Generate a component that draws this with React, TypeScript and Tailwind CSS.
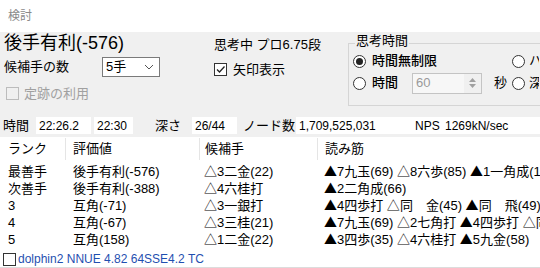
import React from 'react';

const font = "font-['Liberation_Sans','Noto_Sans_CJK_JP',sans-serif]";

const Radio: React.FC<{ checked?: boolean }> = ({ checked }) => (
  <span className="flex h-[13px] w-[13px] shrink-0 items-center justify-center rounded-full border border-[#333] bg-white">
    {checked && <span className="h-[7px] w-[7px] rounded-full bg-[#222]" />}
  </span>
);

const StatBox: React.FC<{ w: string; children?: React.ReactNode }> = ({ w, children }) => (
  <div className={`${w} flex h-[17px] shrink-0 items-center bg-white pl-[3px]`}>{children}</div>
);

// triangles: Lato has no such glyph, so they fall back to the full-width CJK face
const Kif: React.FC<{ text: string }> = ({ text }) => (
  <>
    {text.split(/([▲△])/).map((part, i) =>
      part === '▲' || part === '△' ? (
        <span key={i} className="font-['Lato','Noto_Sans_CJK_JP',sans-serif]">{part}</span>
      ) : (
        <span key={i}>{part}</span>
      )
    )}
  </>
);

const rows = [
  { rank: '最善手', value: '後手有利(-576)', move: '△3二金(22)', pv: '▲7九玉(69) △8六歩(85) ▲1一角成(11)' },
  { rank: '次善手', value: '後手有利(-388)', move: '△4六桂打', pv: '▲2二角成(66)' },
  { rank: '3', value: '互角(-71)', move: '△3一銀打', pv: '▲4四歩打 △同　金(45) ▲同　飛(49)' },
  { rank: '4', value: '互角(-67)', move: '△3三桂(21)', pv: '▲7九玉(69) △2七角打 ▲4四歩打 △同' },
  { rank: '5', value: '互角(158)', move: '△1二金(22)', pv: '▲3四歩(35) △4六桂打 ▲5九金(58)' },
];

export default function App() {
  return (
    <div className={`${font} h-[268px] w-[540px] overflow-hidden bg-[#f0f0f0] text-[13px] text-black`}>
      {/* title */}
      <div className="flex h-[32px] items-center bg-white pl-[8px] text-[12px] text-[#8a8a8a]">検討</div>

      {/* controls */}
      <div className="flex h-[82px] overflow-hidden">
        <div className="w-[210px] shrink-0">
          <div className="h-[24px] pl-[4px] text-[18px] leading-[22px]">後手有利(-576)</div>
          <div className="mt-[1px] flex h-[20px] items-center pl-[4px]">
            <span className="w-[98px]">候補手の数</span>
            <div className="flex h-[20px] w-[58px] items-center justify-between border border-[#7a7a7a] bg-white pl-[3px] pr-[5px]">
              <span>5手</span>
              <svg width="10" height="6" viewBox="0 0 10 6">
                <path d="M1 1 L5 5 L9 1" fill="none" stroke="#555" strokeWidth="1" />
              </svg>
            </div>
          </div>
          <div className="mt-[7px] flex items-center pl-[6px] text-[#a0a0a0]">
            <span className="h-[13px] w-[13px] border border-[#bcbcbc] bg-[#f0f0f0]" />
            <span className="ml-[5px]">定跡の利用</span>
          </div>
        </div>

        <div className="w-[138px] shrink-0 pl-[4px]">
          <div className="mt-[5px] h-[16px] leading-[16px]">思考中 プロ6.75段</div>
          <div className="mt-[7px] flex items-center">
            <span className="flex h-[13px] w-[13px] items-center justify-center border border-[#333] bg-white">
              <svg width="11" height="11" viewBox="0 0 11 11">
                <path d="M2 5.5 L4.5 8 L9.5 2.5" fill="none" stroke="#222" strokeWidth="1.3" />
              </svg>
            </span>
            <span className="ml-[6px]">矢印表示</span>
          </div>
        </div>

        <div className="relative mt-[11px] h-[63px] w-[192px] shrink-0 whitespace-nowrap border border-r-0 border-[#d5d5d5]">
          <span className="absolute left-[6px] top-[-11px] bg-[#f0f0f0] px-[1px] leading-[16px]">思考時間</span>
          <div className="flex h-[24px] items-end pl-[4px]">
            <Radio checked />
            <span className="ml-[6px] w-[140px] shrink-0 font-medium leading-[14px]">時間無制限</span>
            <Radio />
            <span className="ml-[4px] w-[10px] shrink-0 overflow-hidden leading-[14px]">ハ</span>
          </div>
          <div className="mt-[4px] flex h-[22px] items-center pl-[4px]">
            <Radio />
            <span className="ml-[6px] w-[40px] shrink-0 font-medium">時間</span>
            <div className="flex h-[21px] w-[70px] shrink-0 items-center justify-between border border-[#c4c4c4] bg-[#f7f7f7] pl-[3px] text-[#9a9a9a]">
              <span>60</span>
              <span className="flex h-full w-[17px] flex-col items-center justify-center gap-[2px] bg-[#f0f0f0]">
                <svg width="7" height="4" viewBox="0 0 7 4"><path d="M0 4 L3.5 0 L7 4 Z" fill="#a0a0a0" /></svg>
                <svg width="7" height="4" viewBox="0 0 7 4"><path d="M0 0 L3.5 4 L7 0 Z" fill="#a0a0a0" /></svg>
              </span>
            </div>
            <span className="ml-[12px] w-[18px] shrink-0">秒</span>
            <Radio />
            <span className="ml-[4px] w-[10px] shrink-0 overflow-hidden">深</span>
          </div>
        </div>
      </div>

      {/* stats */}
      <div className="flex h-[23px] items-center whitespace-nowrap text-[12px]">
        <span className="w-[36px] shrink-0 pl-[3px] text-[13px]">時間</span>
        <StatBox w="w-[55px]">22:26.2</StatBox>
        <span className="w-[3px] shrink-0" />
        <StatBox w="w-[39px]">22:30</StatBox>
        <span className="w-[59px] shrink-0 pl-[22px] text-[13px]">深さ</span>
        <StatBox w="w-[45px]">26/44</StatBox>
        <span className="w-[59px] shrink-0 pl-[6px] text-[13px]">ノード数</span>
        <StatBox w="w-[111px]">1,709,525,031</StatBox>
        <StatBox w="flex-1">
          <span className="ml-[5px] w-[30px]">NPS</span>
          <span>1269kN/sec</span>
        </StatBox>
      </div>

      {/* list */}
      <div className="h-[131px] border-b border-[#dcdcdc] bg-white">
        <div className="flex h-[24px] items-center">
          <span className="w-[66px] border-r border-[#e5e5e5] pl-[8px] leading-[22px]">ランク</span>
          <span className="w-[134px] border-r border-[#e5e5e5] pl-[7px] leading-[22px]">評価値</span>
          <span className="w-[118px] border-r border-[#e5e5e5] pl-[5px] leading-[22px]">候補手</span>
          <span className="pl-[7px] leading-[22px]">読み筋</span>
        </div>
        <div className="pt-[2px]">
          {rows.map((r) => (
            <div key={r.rank} className="flex h-[17px] items-center whitespace-nowrap leading-[15px]">
              <span className="w-[66px] shrink-0 pl-[8px]">{r.rank}</span>
              <span className="w-[134px] shrink-0 pl-[7px]">{r.value}</span>
              <span className="w-[118px] shrink-0 overflow-hidden pl-[4px]"><Kif text={r.move} /></span>
              <span className="shrink-0 pl-[6px]"><Kif text={r.pv} /></span>
            </div>
          ))}
        </div>
        <div className="mt-[3px] flex h-[16px] items-center pl-[3px]">
          <span className="h-[13px] w-[13px] shrink-0 border border-[#333] bg-white" />
          <span className="ml-[2px] whitespace-nowrap text-[12px] text-[#1f4fb0]">
            dolphin2 NNUE 4.82 64SSE4.2 TC
          </span>
        </div>
      </div>
    </div>
  );
}
